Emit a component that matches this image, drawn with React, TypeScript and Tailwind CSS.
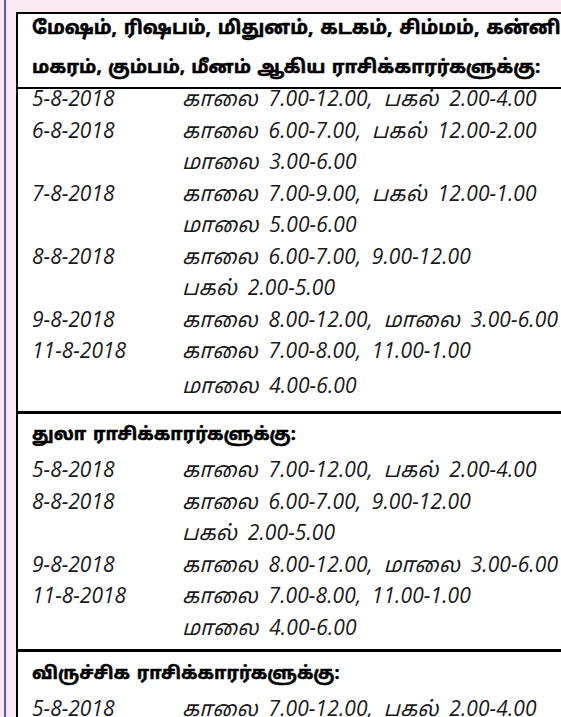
const rows1: [string, string[]][] = [
  ["5-8-2018", ["காலை 7.00-12.00, பகல் 2.00-4.00"]],
  ["6-8-2018", ["காலை 6.00-7.00, பகல் 12.00-2.00", "மாலை 3.00-6.00"]],
  ["7-8-2018", ["காலை 7.00-9.00, பகல் 12.00-1.00", "மாலை 5.00-6.00"]],
  ["8-8-2018", ["காலை 6.00-7.00, 9.00-12.00", "பகல் 2.00-5.00"]],
  ["9-8-2018", ["காலை 8.00-12.00, மாலை 3.00-6.00"]],
];

const rows2: [string, string[]][] = [
  ["5-8-2018", ["காலை 7.00-12.00, பகல் 2.00-4.00"]],
  ["8-8-2018", ["காலை 6.00-7.00, 9.00-12.00", "பகல் 2.00-5.00"]],
  ["9-8-2018", ["காலை 8.00-12.00, மாலை 3.00-6.00"]],
  ["11-8-2018", ["காலை 7.00-8.00, 11.00-1.00", "மாலை 4.00-6.00"]],
];

const rows3: [string, string[]][] = [["5-8-2018", ["காலை 7.00-12.00, பகல் 2.00-4.00"]]];

const Line = ({ date, text, className = "" }: { date: string; text: string; className?: string }) => (
  <div className={"flex leading-[31.5px] italic text-[21px] text-[#1a1a1a] whitespace-nowrap " + className}>
    <span className="w-[150px] shrink-0">{date}</span>
    <span className="tracking-[0.1px] [word-spacing:5px]">{text}</span>
  </div>
);

const Rows = ({ rows }: { rows: [string, string[]][] }) => (
  <div className="flex flex-col">
    {rows.map(([date, times]) =>
      times.map((t, i) => <Line key={date + i} date={i === 0 ? date : ""} text={t} />)
    )}
  </div>
);

const Heading = ({ children, className = "" }: { children: string; className?: string }) => (
  <div
    className={
      "font-bold text-[18px] leading-[38px] text-black whitespace-nowrap [word-spacing:2px] [-webkit-text-stroke:0.5px_black] " +
      className
    }
  >
    {children}
  </div>
);

export default function App() {
  return (
    <div
      className="w-[561px] h-[717px] overflow-hidden bg-[#fbe9f2] pl-[4px]"
      style={{ fontFamily: '"Open Sans", "Noto Sans Tamil", "Noto Sans", sans-serif' }}
    >
      <div className="h-full w-[700px] border-l-2 border-[#4b5ec4] pl-[10px] pt-[12px]">
        <div className="w-[640px] h-[800px] bg-white border-2 border-black">
          {/* header */}
          <div className="border-b-2 border-black px-[14px] pb-[2px]">
            <div className="-mt-[6px] font-bold leading-[38.5px] text-black whitespace-nowrap [-webkit-text-stroke:0.5px_black]">
              <div className="text-[19px] [word-spacing:2px]">மேஷம், ரிஷபம், மிதுனம், கடகம், சிம்மம், கன்னி</div>
              <div className="text-[18.5px] [word-spacing:1.5px]">மகரம், கும்பம், மீனம் ஆகிய ராசிக்காரர்களுக்கு:</div>
            </div>
          </div>
          <div className="px-[14px] pb-[10px] border-b-[3px] border-black">
            <div className="-mt-[6px]">
              <Rows rows={rows1} />
              <Line date="11-8-2018" text="காலை 7.00-8.00, 11.00-1.00" />
              <Line date="" text="மாலை 4.00-6.00" className="mt-[3px]" />
            </div>
          </div>
          <div className="px-[14px] pb-[6px] border-b-[3px] border-black">
            <Heading>துலா ராசிக்காரர்களுக்கு:</Heading>
            <div className="mt-[2px]">
              <Rows rows={rows2} />
            </div>
          </div>
          <div className="px-[14px]">
            <Heading className="pt-[1px]">விருச்சிக ராசிக்காரர்களுக்கு:</Heading>
            <div className="mt-[2px]">
              <Rows rows={rows3} />
            </div>
          </div>
        </div>
      </div>
    </div>
  );
}
